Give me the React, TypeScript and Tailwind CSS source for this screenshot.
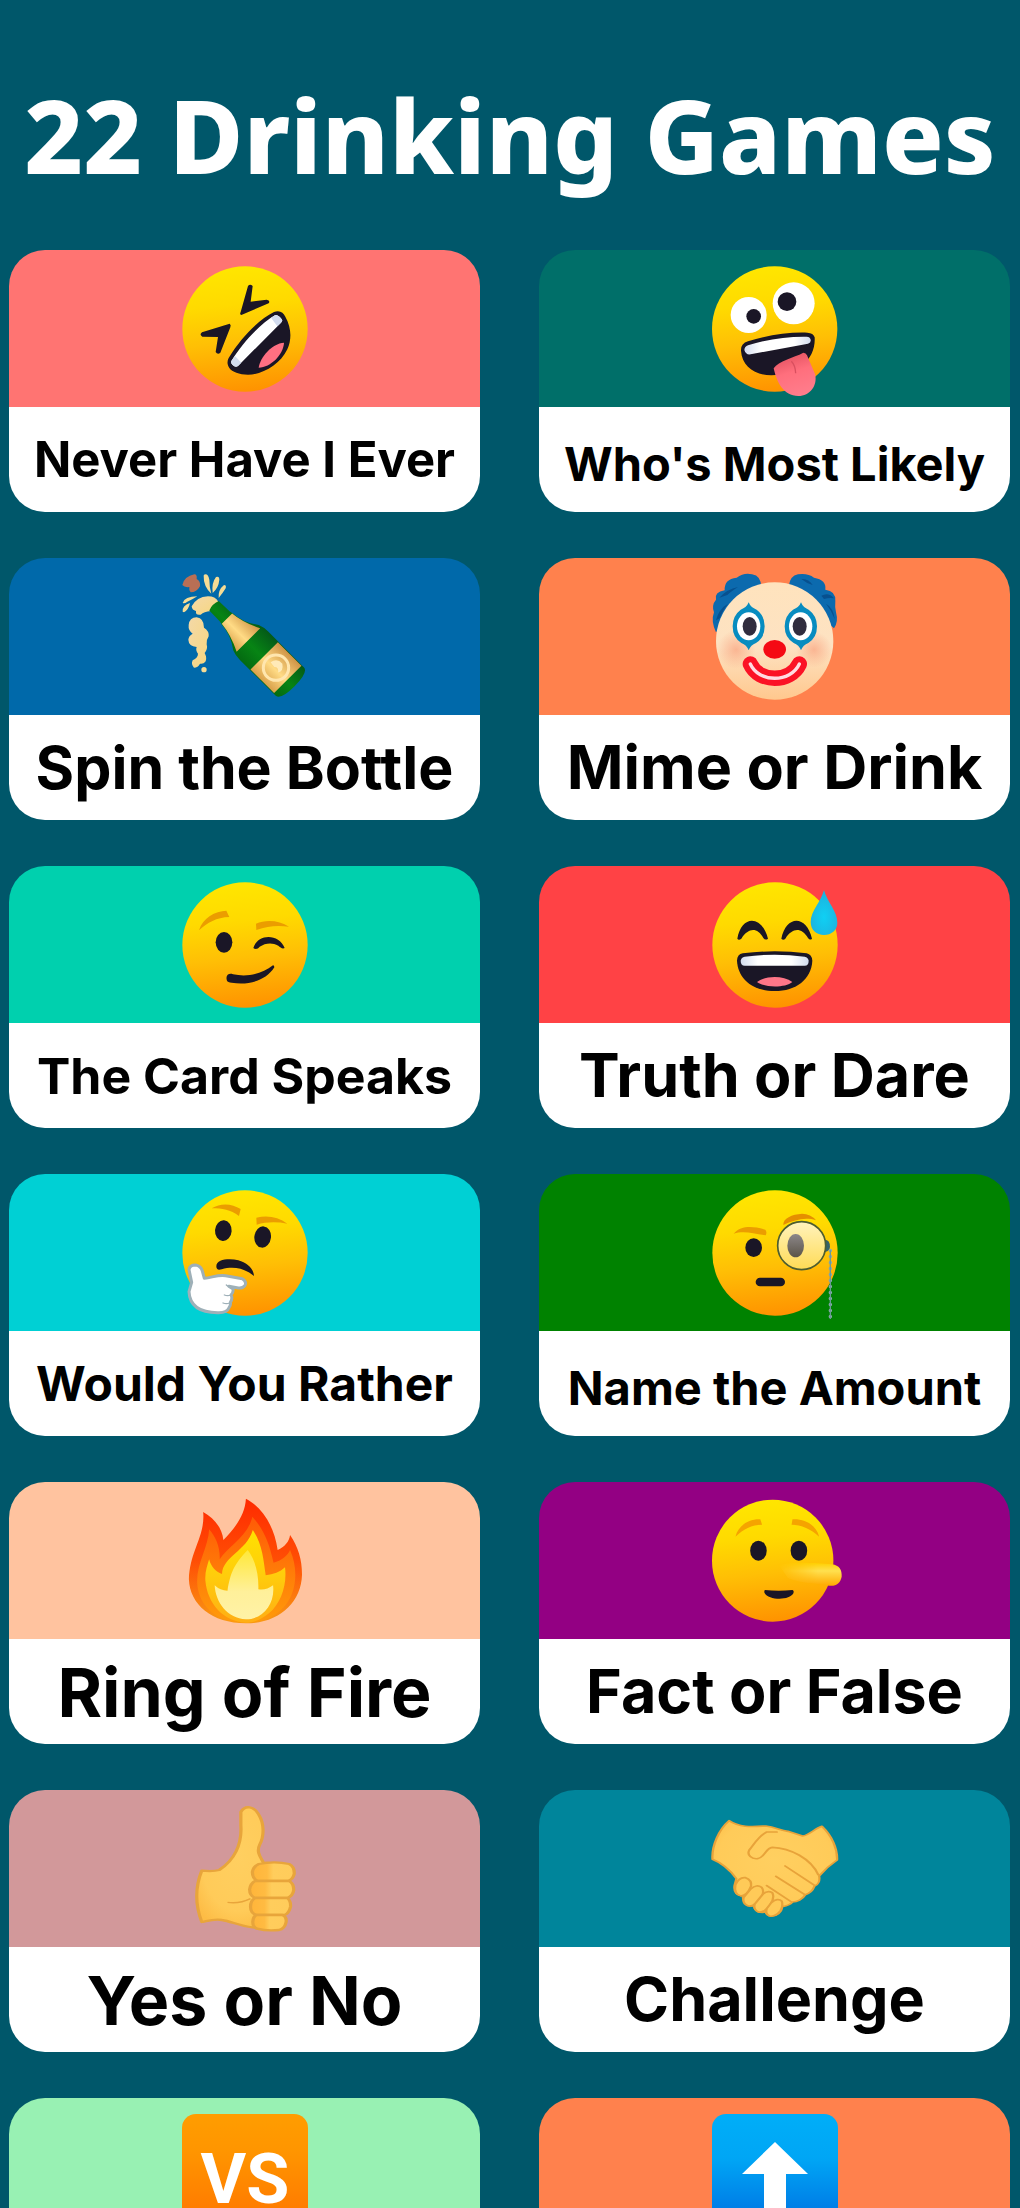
import type { ReactNode } from 'react';

const INK = '#1a1626';

interface EmojiProps {
  viewBox: string;
  stretch?: boolean;
  children: ReactNode;
}

function Emoji({ viewBox, stretch, children }: EmojiProps) {
  return (
    <svg
      viewBox={viewBox}
      preserveAspectRatio={stretch ? 'none' : 'xMidYMid meet'}
      className="size-[126px] overflow-visible"
      aria-hidden="true"
    >
      {children}
    </svg>
  );
}

// Gradients shared by every emoji on the page
function Gradients() {
  return (
    <svg className="absolute size-0" aria-hidden="true">
      <defs>
        <linearGradient id="face" x1="0.45" y1="0" x2="0.55" y2="1">
          <stop offset="0" stopColor="#ffe600" />
          <stop offset="0.3" stopColor="#ffda00" />
          <stop offset="0.6" stopColor="#ffbf05" />
          <stop offset="1" stopColor="#ff9200" />
        </linearGradient>
        <linearGradient id="teeth" x1="0" y1="0" x2="1" y2="0">
          <stop offset="0" stopColor="#d3dcef" />
          <stop offset="0.25" stopColor="#ffffff" />
          <stop offset="0.75" stopColor="#ffffff" />
          <stop offset="1" stopColor="#d3dcef" />
        </linearGradient>
        <linearGradient id="tongue" x1="0.3" y1="0" x2="0.6" y2="1">
          <stop offset="0" stopColor="#e2505f" />
          <stop offset="0.45" stopColor="#ff6f7d" />
          <stop offset="1" stopColor="#ff7d8c" />
        </linearGradient>
        <linearGradient id="glass" x1="0" y1="0" x2="1" y2="0">
          <stop offset="0" stopColor="#046a11" />
          <stop offset="0.45" stopColor="#078414" />
          <stop offset="1" stopColor="#045a18" />
        </linearGradient>
        <linearGradient id="gold" x1="0" y1="0" x2="1" y2="0">
          <stop offset="0" stopColor="#d9a04a" />
          <stop offset="0.45" stopColor="#ffdb85" />
          <stop offset="1" stopColor="#cf9446" />
        </linearGradient>
        <linearGradient id="foam" x1="0" y1="0" x2="1" y2="1">
          <stop offset="0" stopColor="#f4d9a8" />
          <stop offset="1" stopColor="#f6d67e" />
        </linearGradient>
        <linearGradient id="clown" x1="0" y1="0" x2="0" y2="1">
          <stop offset="0" stopColor="#ffe3bd" />
          <stop offset="0.55" stopColor="#fde2c2" />
          <stop offset="1" stopColor="#ffc88e" />
        </linearGradient>
        <radialGradient id="cheek">
          <stop offset="0" stopColor="#f9a37f" stopOpacity="0.7" />
          <stop offset="1" stopColor="#f9a37f" stopOpacity="0" />
        </radialGradient>
        <radialGradient id="drop" cx="0.5" cy="0.6" r="0.6">
          <stop offset="0" stopColor="#0fd0f4" />
          <stop offset="1" stopColor="#1fb0dc" />
        </radialGradient>
        <linearGradient id="lens" x1="0" y1="0" x2="0" y2="1">
          <stop offset="0" stopColor="#fff3bd" />
          <stop offset="1" stopColor="#ffdb55" />
        </linearGradient>
        <linearGradient id="lensEye" x1="0" y1="0" x2="0" y2="1">
          <stop offset="0" stopColor="#8c8789" />
          <stop offset="1" stopColor="#5b5448" />
        </linearGradient>
        <linearGradient id="fireOuter" x1="0" y1="0" x2="0" y2="1">
          <stop offset="0" stopColor="#ff2a00" />
          <stop offset="0.5" stopColor="#ff4e05" />
          <stop offset="1" stopColor="#f89a14" />
        </linearGradient>
        <linearGradient id="fireMiddle" x1="0" y1="0" x2="0" y2="1">
          <stop offset="0" stopColor="#ff5a06" />
          <stop offset="1" stopColor="#ff9b0a" />
        </linearGradient>
        <linearGradient id="fireInner" x1="0" y1="0" x2="0" y2="1">
          <stop offset="0" stopColor="#ffe100" />
          <stop offset="0.5" stopColor="#ffcc0c" />
          <stop offset="1" stopColor="#ffae14" />
        </linearGradient>
        <linearGradient id="fireCore" x1="0" y1="0" x2="0" y2="1">
          <stop offset="0" stopColor="#ffe838" />
          <stop offset="0.6" stopColor="#fff09a" />
          <stop offset="1" stopColor="#fff2a6" />
        </linearGradient>
        <linearGradient id="nose" x1="0" y1="0" x2="0" y2="1">
          <stop offset="0" stopColor="#ffcf00" />
          <stop offset="0.35" stopColor="#ffe04f" />
          <stop offset="1" stopColor="#ffa900" />
        </linearGradient>
        <linearGradient id="noseFade" x1="0" y1="0" x2="1" y2="0">
          <stop offset="0" stopColor="#000" />
          <stop offset="0.6" stopColor="#fff" />
        </linearGradient>
        <linearGradient id="finger" x1="0" y1="0" x2="1" y2="0">
          <stop offset="0" stopColor="#ffb53a" />
          <stop offset="0.35" stopColor="#ffbb42" />
          <stop offset="0.5" stopColor="#ffcd5c" />
          <stop offset="1" stopColor="#ffcc5b" />
        </linearGradient>
        <radialGradient id="hand" cx="0.5" cy="0.4" r="0.65">
          <stop offset="0" stopColor="#ffcf60" />
          <stop offset="0.7" stopColor="#ffcb59" />
          <stop offset="1" stopColor="#fdbc45" />
        </radialGradient>
        <linearGradient id="orangeTile" x1="0" y1="0" x2="0" y2="1">
          <stop offset="0" stopColor="#ff9d00" />
          <stop offset="0.3" stopColor="#ff9500" />
          <stop offset="1" stopColor="#ff6f00" />
        </linearGradient>
        <linearGradient id="blueTile" x1="0" y1="0" x2="0" y2="1">
          <stop offset="0" stopColor="#00aef8" />
          <stop offset="0.35" stopColor="#00a6f5" />
          <stop offset="0.75" stopColor="#007ee6" />
          <stop offset="1" stopColor="#0068dc" />
        </linearGradient>
      </defs>
    </svg>
  );
}

function Rofl() {
  return (
    <Emoji viewBox="546 76 378 378">
      <circle cx="735" cy="265" r="188" fill="url(#face)" />
      <path d="M744 136 Q750 128 758 136 L752 183 L800 177 Q812 180 806 188 L724 223 Q718 222 722 214 Z" fill={INK} />
      <path d="M689 249 Q694 252 691 260 L661 336 Q653 343 647 334 L654 289 L607 288 Q597 282 606 275 Z" fill={INK} />
      <path d="M686 352 C722 292 776 237 822 214 C840 208 850 216 856 228 C874 260 876 296 862 326 C840 372 788 402 744 402 C718 402 696 394 688 382 C680 370 682 360 686 352 Z" fill={INK} />
      <path d="M694 361 C728 306 782 248 826 223 Q834 222 844 234 Q850 240 843 246 L714 376 Q706 381 698 373 Q692 368 694 361 Z" fill="#fff" />
      <path d="M694 361 L705 346 L724 366 L714 376 Q706 381 698 373 Q692 368 694 361 Z M813 231 L826 223 Q834 222 844 234 Q850 240 843 246 L832 257 Z" fill="#d3dcef" />
      <path d="M776 381 C780 350 816 308 852 306 C850 342 812 380 776 381 Z" fill="#ff6f82" />
    </Emoji>
  );
}

function Zany() {
  return (
    <Emoji viewBox="544 76 378 378">
      <circle cx="732" cy="265" r="188" fill="url(#face)" />
      <circle cx="654" cy="223" r="54" fill="#fff" />
      <circle cx="789" cy="188" r="63" fill="#fff" />
      <circle cx="669" cy="227" r="22" fill={INK} />
      <circle cx="769" cy="183" r="28" fill={INK} />
      <path d="M631 330 Q630 308 652 302 C712 284 772 274 830 276 Q848 277 852 290 C856 356 800 404 722 404 C672 404 634 376 631 330 Z" fill={INK} />
      <path d="M641 328 Q642 317 652 314 C710 296 770 287 828 288 Q838 288 840 297 Q842 306 832 309 L660 341 Q646 344 641 328 Z" fill="url(#teeth)" />
      <path d="M729 383 C744 360 788 352 818 336 Q826 336 829 344 L853 400 C862 434 838 466 803 466 C758 466 738 424 729 383 Z" fill="url(#tongue)" />
      <path d="M782 362 Q794 374 795 398" stroke="#d94f5f" strokeWidth="4" fill="none" />
    </Emoji>
  );
}

function Bottle() {
  return (
    <Emoji viewBox="546 71 378 378">
      <path d="M547 104 Q553 78 583 72 Q592 72 590 86 Q602 92 600 108 Q590 126 572 126 Q566 120 568 110 Q553 112 547 104 Z" fill="#b96f55" />
      <path d="M612 73 Q624 68 628 88 Q628 110 634 130 Q610 108 611 76 Z M638 128 Q634 98 648 80 Q658 76 658 88 Q656 112 638 128 Z M656 143 Q654 118 672 104 Q680 104 677 114 Q670 126 656 143 Z M548 158 Q554 138 592 138 Q580 146 562 154 Q554 160 548 158 Z M548 184 Q546 166 570 158 Q566 178 552 186 Z" fill="#f6dc95" />
      <path d="M575 168 Q590 140 624 138 Q646 138 655 154 L632 182 Q612 184 602 193 Q586 196 588 182 Q576 180 575 168 Z" fill="url(#foam)" />
      <path d="M566 224 Q568 202 590 201 Q612 204 612 232 Q628 242 626 258 Q618 270 620 282 Q624 296 614 308 Q622 324 616 334 Q610 342 600 340 Q594 352 582 352 Q572 342 578 330 Q594 322 594 310 Q586 300 590 290 Q566 288 565 268 Q566 256 578 250 Q564 240 566 224 Z" fill="url(#foam)" />
      <circle cx="612" cy="358" r="8" fill="#f6dc95" />
      {/* bottle body drawn upright, then tilted */}
      <g transform="translate(642 166) rotate(-45)">
        <path d="M-20 0 Q0 -8 20 0 L21 46 L24 58 Q26 98 54 136 Q60 150 60 170 L60 322 Q58 342 0 342 Q-58 342 -60 322 L-60 170 Q-60 150 -54 136 Q-26 98 -24 58 L-21 46 Z" fill="url(#glass)" />
        <path d="M-22 55 H22 Q26 98 50 146 H-50 Q-26 98 -22 55 Z" fill="url(#gold)" />
        <path d="M-58 213 H58 V313 H-58 Z" fill="url(#gold)" />
        <circle cx="0" cy="263" r="38" fill="none" stroke="#ffe6ae" strokeWidth="9" />
        <path d="M0 240 Q24 244 22 268 Q10 286 -6 278 Q8 268 -2 258 Z" fill="#ffeab8" />
      </g>
    </Emoji>
  );
}

function Clown() {
  return (
    <Emoji viewBox="544 71 378 378">
      <path d="M556 246 Q540 212 550 186 Q542 164 556 148 Q550 126 582 120 Q580 86 618 82 Q640 66 664 72 Q692 76 692 112 L600 200 Z" fill="#0c6aae" />
      <path d="M910 234 Q924 214 916 186 Q912 172 914 152 Q916 122 884 118 Q888 88 850 82 Q832 68 802 72 Q778 76 774 108 L860 190 Z" fill="#0c6aae" />
      <path d="M566 142 Q590 116 622 110 Q600 124 590 134 Z M556 210 Q564 176 592 160 Q574 182 568 204 Z M872 136 Q894 124 910 144 Q894 142 880 146 Z M886 160 Q908 172 912 206 Q902 180 886 160 Z M812 86 Q834 84 846 104 Q826 98 812 86 Z" fill="#07508f" />
      <circle cx="732" cy="272" r="176" fill="url(#clown)" />
      <circle cx="616" cy="298" r="58" fill="url(#cheek)" />
      <circle cx="850" cy="298" r="54" fill="url(#cheek)" />
      <path d="M654 156 Q660 172 678 178 Q702 196 702 228 Q702 262 676 278 Q660 284 654 300 Q648 284 632 278 Q606 262 606 228 Q606 196 630 178 Q648 172 654 156 Z" fill="#078cc0" />
      <path d="M811 156 Q817 172 834 178 Q859 196 859 228 Q859 262 833 278 Q817 284 811 300 Q805 284 789 278 Q762 262 762 228 Q762 196 787 178 Q805 172 811 156 Z" fill="#078cc0" />
      <ellipse cx="654" cy="228" rx="35" ry="42" fill="#fff" />
      <ellipse cx="810" cy="228" rx="35" ry="42" fill="#fff" />
      <ellipse cx="657" cy="228" rx="21" ry="28" fill="#302d3f" />
      <ellipse cx="807" cy="228" rx="21" ry="28" fill="#302d3f" />
      <ellipse cx="732" cy="297" rx="34" ry="28" fill="#f50a14" />
      <path d="M659 341 C684 398 780 398 806 341" fill="none" stroke="#fb1226" strokeWidth="46" strokeLinecap="round" />
      <path d="M659 341 C684 398 780 398 806 341" fill="none" stroke="#ffdbe2" strokeWidth="10" strokeLinecap="round" />
    </Emoji>
  );
}

function Wink() {
  return (
    <Emoji viewBox="65 66 378 378">
      <circle cx="254" cy="255" r="188" fill="url(#face)" />
      <path d="M116 211 C128 172 164 154 198 152 L207 171 C168 172 142 188 116 211 Z" fill="#eb9d00" />
      <path d="M287 191 C318 178 358 182 386 200 C350 196 322 198 288 210 Z" fill="#eb9d00" />
      <ellipse cx="191" cy="247" rx="25" ry="31" fill={INK} />
      <path d="M279 264 C292 220 356 220 373 264 C366 268 360 262 354 257 C334 246 314 250 298 260 C292 268 284 268 279 264 Z" fill={INK} />
      <path d="M200 362 C194 346 206 338 218 343 C262 352 306 342 338 316 Q342 316 342 322 C316 364 262 376 214 368 Q202 367 200 362 Z" fill={INK} />
    </Emoji>
  );
}

function SweatSmile() {
  return (
    <Emoji viewBox="64 66 378 378">
      <circle cx="253" cy="255" r="188" fill="url(#face)" />
      <path d="M140 236 C152 164 214 164 232 236 Q224 242 218 234 C200 202 174 202 152 236 Q144 242 140 236 Z" fill={INK} />
      <path d="M272 236 C286 164 348 164 364 236 Q358 242 352 234 C332 202 306 202 284 236 Q278 242 272 236 Z" fill={INK} />
      <path d="M139 302 Q140 283 156 280 Q252 268 348 280 Q364 284 365 302 C362 358 316 393 252 393 C188 393 142 358 139 302 Z" fill={INK} />
      <path d="M150 302 Q152 292 162 290 Q252 278 342 290 Q352 292 354 302 Q354 317 342 317 H162 Q150 317 150 302 Z" fill="url(#teeth)" />
      <path d="M199 366 C226 346 278 346 305 366 C284 384 222 384 199 366 Z" fill="#ff7688" />
      <path d="M400 90 C410 128 440 152 440 188 C440 210 422 225 400 225 C378 225 360 210 360 186 C360 152 390 128 400 90 Z" fill="url(#drop)" />
    </Emoji>
  );
}

function Thinking() {
  return (
    <Emoji viewBox="65 61 378 378">
      <circle cx="254" cy="250" r="188" fill="url(#face)" />
      <path d="M154 116 C182 98 216 102 241 118 L236 139 C210 120 186 116 154 116 Z" fill="#eb9d00" />
      <path d="M288 144 C322 136 354 142 381 162 C350 156 318 156 289 165 Z" fill="#eb9d00" />
      <ellipse cx="189" cy="183" rx="25" ry="31" fill={INK} transform="rotate(4 189 183)" />
      <ellipse cx="307" cy="202" rx="25" ry="32" fill={INK} transform="rotate(6 307 202)" />
      <path d="M168 290 C168 268 208 266 234 272 C262 280 280 298 281 319 C256 298 222 288 184 299 Q168 304 168 290 Z" fill={INK} />
      <path
        d="M86 300 Q88 286 106 286 Q122 289 126 304 L132 326 C154 324 174 314 196 318 L246 327 Q260 336 254 347 Q247 357 234 355 L206 350 L218 358 Q220 368 212 376 Q218 386 210 398 Q212 406 206 414 Q200 430 172 429 C116 429 88 406 86 366 L94 338 Z"
        fill="#fff"
        stroke="#9eb0b8"
        strokeWidth="9"
        strokeLinejoin="round"
      />
      <path d="M198 346 Q206 354 216 356 M192 376 Q202 380 212 376 M188 400 Q198 404 208 400" fill="none" stroke="#9eb0b8" strokeWidth="4" strokeLinecap="round" />
    </Emoji>
  );
}

function Monocle() {
  return (
    <Emoji viewBox="64 61 378 378">
      <circle cx="253" cy="250" r="188" fill="url(#face)" />
      <path d="M129 192 C152 166 188 170 224 180 Q230 188 225 197 C190 192 160 182 129 192 Z" fill="#eb9d00" />
      <path d="M278 166 C276 146 304 134 334 132 Q360 132 376 152 C344 142 314 150 278 166 Z" fill="#e58f00" />
      <ellipse cx="189" cy="234" rx="25" ry="28" fill={INK} />
      <rect x="195" y="324" width="88" height="26" rx="13" fill={INK} />
      <path d="M402 210 Q418 210 418 232 Q416 246 402 246 Z" fill="#34616a" />
      <circle cx="333" cy="228" r="72" fill="url(#lens)" stroke="#4d5d30" strokeWidth="5" />
      <ellipse cx="315" cy="228" rx="25" ry="35" fill="url(#lensEye)" />
      <path d="M419 242 V448" stroke="#8babad" strokeWidth="10" strokeLinecap="round" strokeDasharray="1 17" />
      <path d="M419 242 V448" stroke="#6b9a97" strokeWidth="4" />
    </Emoji>
  );
}

function Fire() {
  return (
    <Emoji viewBox="47 56 274 378" stretch>
      <path d="M186 58 C222 84 248 142 255 212 C270 202 280 188 282 167 C300 204 308 240 308 286 C306 372 256 432 186 432 C112 432 64 376 62 300 C64 214 98 170 93 98 C118 118 134 146 137 182 C162 146 184 108 186 58 Z" fill="url(#fireOuter)" />
      <path d="M200 112 C222 146 236 184 246 250 C264 244 276 230 282 212 C302 276 294 340 272 378 C252 412 222 430 186 430 C132 430 96 396 84 342 C68 270 104 214 106 150 C120 172 130 202 129 240 C148 200 190 172 200 112 Z" fill="url(#fireMiddle)" />
      <path d="M201 152 C222 196 224 240 229 288 C246 286 260 278 271 264 C276 316 262 372 236 402 C220 420 204 430 186 430 C136 428 102 370 98 306 C96 280 102 260 106 240 C110 262 120 278 134 284 C136 230 186 218 201 152 Z" fill="url(#fireInner)" />
      <path d="M190 212 C208 246 214 288 213 330 Q230 334 245 318 C250 372 224 420 186 420 C146 418 120 370 118 318 Q130 334 146 334 C152 282 160 254 190 212 Z" fill="url(#fireCore)" />
    </Emoji>
  );
}

function Lying() {
  return (
    <Emoji viewBox="1201 56 274 378" stretch>
      <mask id="noseMask">
        <rect x="1345" y="240" width="145" height="90" fill="url(#noseFade)" />
      </mask>
      <ellipse cx="1333" cy="244" rx="132" ry="183" fill="url(#face)" />
      <path d="M1252 172 C1258 138 1282 118 1306 120 L1310 136 C1288 136 1268 150 1252 172 Z M1434 172 C1428 138 1404 118 1376 120 L1374 136 C1394 136 1418 150 1434 172 Z" fill="#f5a400" />
      <ellipse cx="1302" cy="214" rx="18" ry="30" fill={INK} />
      <ellipse cx="1390" cy="214" rx="18" ry="30" fill={INK} />
      <path d="M1346 256 C1384 246 1432 252 1462 255 C1478 258 1484 272 1483 292 C1480 312 1470 322 1456 319 C1428 312 1392 312 1366 296 Z" fill="url(#nose)" mask="url(#noseMask)" />
      <path d="M1316 332 Q1346 336 1376 332 Q1380 334 1378 342 C1370 364 1324 364 1315 340 Q1314 334 1316 332 Z" fill={INK} />
    </Emoji>
  );
}

function ThumbsUp() {
  return (
    <Emoji viewBox="47 52 274 378" stretch>
      <g stroke="#e8a53b" strokeWidth="7" strokeLinejoin="round">
        <path d="M175 70 C184 48 204 52 214 78 C226 104 226 142 216 168 C208 190 218 206 224 222 L260 226 V420 L200 416 C172 412 154 398 134 394 C118 390 104 396 90 400 C76 350 76 294 90 246 C106 248 118 248 128 244 C160 216 178 168 175 110 Z" fill="url(#hand)" />
        <path d="M214 226 Q248 216 280 226 Q292 234 291 256 Q288 272 278 277 H212 Q200 270 200 250 Q202 234 214 226 Z" fill="url(#finger)" />
        <path d="M206 277 H280 Q290 284 290 304 Q288 322 276 328 H206 Q194 322 194 302 Q196 284 206 277 Z" fill="url(#finger)" />
        <path d="M206 328 H276 Q284 336 283 354 Q280 374 270 379 H210 Q196 374 196 354 Q196 336 206 328 Z" fill="url(#finger)" />
        <path d="M208 379 H266 Q276 386 273 402 Q270 420 258 424 Q232 428 210 420 Q200 414 201 398 Q202 384 208 379 Z" fill="url(#finger)" />
        <path d="M146 341 Q172 346 196 330" fill="none" strokeWidth="4" />
      </g>
    </Emoji>
  );
}

function Handshake() {
  return (
    <Emoji viewBox="1201 52 274 378" stretch>
      <g stroke="#e8a33a" strokeWidth="5" strokeLinejoin="round" strokeLinecap="round">
        <path d="M1238 96 C1262 118 1290 114 1318 112 C1340 116 1350 126 1366 128 L1398 142 C1412 140 1424 120 1440 113 C1462 142 1474 180 1473 214 C1458 228 1444 246 1434 262 C1436 276 1432 288 1424 292 C1420 306 1414 314 1404 318 C1398 332 1386 340 1376 340 C1372 348 1362 352 1354 354 C1352 372 1342 382 1332 382 C1322 382 1318 376 1318 370 C1304 374 1294 366 1292 352 C1276 352 1268 340 1268 322 C1254 320 1248 308 1250 290 L1254 270 C1240 244 1224 224 1202 212 C1200 172 1216 122 1238 96 Z" fill="url(#hand)" />
        <path d="M1342 130 H1320 C1302 142 1292 168 1282 184 C1276 200 1288 212 1300 210 C1316 206 1318 178 1332 176 C1372 178 1416 210 1432 258" fill="none" />
        <path d="M1360 232 L1424 290 M1340 263 L1402 317 M1320 291 L1374 340" fill="none" />
        <path d="M1252 288 Q1260 264 1274 267 Q1288 274 1286 292 Q1278 320 1264 322 Q1248 318 1252 288 Z" fill="#ffca58" />
        <path d="M1286 300 Q1298 286 1309 296 Q1316 308 1308 328 Q1294 354 1280 352 Q1266 344 1270 326 Z" fill="#ffca58" />
        <path d="M1312 316 Q1322 304 1332 312 Q1338 326 1328 348 Q1314 374 1302 370 Q1290 362 1294 346 Z" fill="#ffca58" />
        <path d="M1330 342 Q1344 326 1353 338 Q1356 350 1350 366 Q1338 386 1326 382 Q1316 374 1320 360 Z" fill="#ffca58" />
      </g>
    </Emoji>
  );
}

function Versus() {
  return (
    <Emoji viewBox="0 0 126 126">
      <rect width="126" height="126" rx="14" fill="url(#orangeTile)" />
      <text x="63" y="89" textAnchor="middle" fill="#fff" className="font-['Roboto',sans-serif] text-[70px] font-bold">
        VS
      </text>
    </Emoji>
  );
}

function UpArrow() {
  return (
    <Emoji viewBox="0 0 126 126">
      <rect width="126" height="126" rx="14" fill="url(#blueTile)" />
      <path d="M63 28 L96 60 H74 V104 H52 V60 H30 Z" fill="#fff" />
    </Emoji>
  );
}

interface Game {
  name?: string;
  band: string;
  text?: string;
  icon: ReactNode;
}

const games: Game[] = [
  { name: 'Never Have I Ever', band: 'bg-[#ff7472]', text: 'text-[49px]', icon: <Rofl /> },
  { name: "Who's Most Likely", band: 'bg-[#006f69]', text: 'text-[47px] pt-2', icon: <Zany /> },
  { name: 'Spin the Bottle', band: 'bg-[#0069aa]', text: 'text-[59px]', icon: <Bottle /> },
  { name: 'Mime or Drink', band: 'bg-[#ff814d]', text: 'text-[61px]', icon: <Clown /> },
  { name: 'The Card Speaks', band: 'bg-[#00d0ae]', text: 'text-[50px]', icon: <Wink /> },
  { name: 'Truth or Dare', band: 'bg-[#ff4245]', text: 'text-[61px]', icon: <SweatSmile /> },
  { name: 'Would You Rather', band: 'bg-[#00d0d4]', text: 'text-[48px]', icon: <Thinking /> },
  { name: 'Name the Amount', band: 'bg-[#008200]', text: 'text-[47px] pt-2', icon: <Monocle /> },
  { name: 'Ring of Fire', band: 'bg-[#ffc39f]', text: 'text-[68px]', icon: <Fire /> },
  { name: 'Fact or False', band: 'bg-[#930083]', text: 'text-[61px]', icon: <Lying /> },
  { name: 'Yes or No', band: 'bg-[#d2989a]', text: 'text-[68px]', icon: <ThumbsUp /> },
  { name: 'Challenge', band: 'bg-[#00859b]', text: 'text-[61px]', icon: <Handshake /> },
  { band: 'bg-[#98f1b3]', icon: <Versus /> },
  { band: 'bg-[#ff814d]', icon: <UpArrow /> },
];

function GameCard({ name, band, text, icon }: Game) {
  return (
    <button type="button" className="flex h-[262px] w-full flex-col overflow-hidden rounded-[36px]">
      <span className={`flex h-[157px] w-full justify-center pt-4 ${band}`}>{icon}</span>
      <span className={`flex w-full flex-1 items-center justify-center bg-white leading-none font-bold whitespace-nowrap text-black ${text ?? ''}`}>
        {name}
      </span>
    </button>
  );
}

export default function App() {
  return (
    <main className="h-screen overflow-hidden bg-[#00576a] font-['Inter','Liberation_Sans',sans-serif]">
      <Gradients />
      <h1 className="flex h-[250px] items-center justify-center pt-5 font-['Noto_Sans',sans-serif] text-[102px] leading-none font-extrabold whitespace-nowrap text-white">
        22 Drinking Games
      </h1>
      <div className="grid grid-cols-2 gap-x-[59px] gap-y-[46px] pr-[10px] pl-[9px]">
        {games.map((game, i) => (
          <GameCard key={i} {...game} />
        ))}
      </div>
    </main>
  );
}
